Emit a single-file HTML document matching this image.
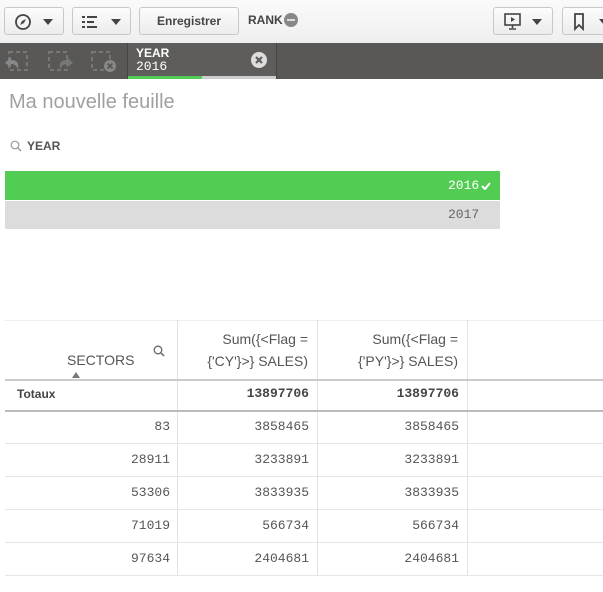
<!DOCTYPE html>
<html><head><meta charset="utf-8"><style>
*{margin:0;padding:0;box-sizing:border-box}
body{width:603px;height:592px;background:#fff;font-family:"Liberation Sans",sans-serif;position:relative;overflow:hidden}
.a{position:absolute}
.tb{left:0;top:0;width:603px;height:43px;background:linear-gradient(#fafafa,#efefef)}
.btn{position:absolute;top:7px;height:28px;border:1px solid #c8c8c8;border-radius:3px;background:linear-gradient(#fcfcfc,#ececec)}
.tri{position:absolute;width:0;height:0;border-left:5px solid transparent;border-right:5px solid transparent;border-top:6px solid #444;top:11px}
.dark{left:0;top:43px;width:603px;height:36px;background:#595856}
.mono{font-family:"Liberation Mono","DejaVu Sans Mono",monospace}
.v{position:absolute;width:1px;background:#e2e2e2}
.h{position:absolute;left:5px;width:598px;height:1px;background:#e6e6e6}
.n{position:absolute;font-family:"Liberation Mono",monospace;font-size:13px;color:#555;text-align:right}
</style></head><body>
<div class="a tb"></div>
<div class="btn" style="left:4px;width:60px"><svg class="a" style="left:9px;top:5px" width="18" height="18" viewBox="0 0 18 18"><circle cx="9" cy="9" r="7" fill="none" stroke="#444" stroke-width="1.8"/><path d="M12 6 L10 10 L6 12 L8 8Z" fill="#444"/></svg><div class="tri" style="left:38px"></div></div>
<div class="btn" style="left:72px;width:59px"><svg class="a" style="left:9px;top:7px" width="18" height="14"><g fill="#444"><rect x="0" y="1" width="3" height="2"/><rect x="5" y="1" width="10" height="2"/><rect x="0" y="6" width="3" height="2"/><rect x="5" y="6" width="7" height="2"/><rect x="0" y="11" width="3" height="2"/><rect x="5" y="11" width="10" height="2"/></g></svg><div class="tri" style="left:38px"></div></div>
<div class="btn" style="left:139px;width:100px;font-size:12px;font-weight:bold;color:#444;text-align:center;line-height:26px">Enregistrer</div>
<div class="a" style="left:248px;top:13px;font-size:12px;font-weight:bold;color:#444">RANK</div>
<div class="a" style="left:284px;top:13px;width:14px;height:14px;border-radius:7px;background:#888"><div class="a" style="left:3px;top:6px;width:8px;height:2px;background:#ddd"></div></div>
<div class="btn" style="left:493px;width:60px"><svg class="a" style="left:10px;top:5px" width="18" height="18"><rect x="1" y="1" width="15" height="11" fill="none" stroke="#444" stroke-width="1.6"/><path d="M7 4 L11 6.5 L7 9Z" fill="#444"/><path d="M8.5 12 V15 M5 16 H12" stroke="#444" stroke-width="1.6"/></svg><div class="tri" style="left:38px"></div></div>
<div class="btn" style="left:562px;width:50px"><svg class="a" style="left:10px;top:5px" width="12" height="18"><path d="M2 1 H10 V16 L6 12 L2 16Z" fill="none" stroke="#444" stroke-width="1.8"/></svg><div class="tri" style="left:36px"></div></div>
<div class="a dark"></div>
<svg class="a" style="left:3px;top:49px" width="120" height="24"><g stroke="#777" stroke-width="2" fill="none" stroke-dasharray="4 3"><rect x="6" y="3" width="18" height="18"/><rect x="46" y="3" width="18" height="18"/><rect x="89" y="3" width="18" height="18"/></g><path d="M2 14 L8 8 L8 11 C14 11 16 14 15 20 C13 16 11 15 8 15 L8 18Z" fill="#888"/><path d="M70 14 L64 8 L64 11 C58 11 56 14 57 20 C59 16 61 15 64 15 L64 18Z" fill="#777"/><circle cx="107" cy="17" r="6" fill="#888"/><path d="M104.5 14.5 L109.5 19.5 M109.5 14.5 L104.5 19.5" stroke="#595856" stroke-width="1.8"/></svg>
<div class="a" style="left:127px;top:43px;width:150px;height:36px;background:#5e5d5b;border-left:1px solid #444;border-right:1px solid #444"></div>
<div class="a" style="left:136px;top:46px;font-size:12px;font-weight:bold;color:#fff">YEAR</div>
<div class="a mono" style="left:136px;top:59px;font-size:13px;color:#fff">2016</div>
<div class="a" style="left:251px;top:52px;width:16px;height:16px;border-radius:8px;background:#ddd"><svg class="a" style="left:0;top:0" width="16" height="16"><path d="M5 5 L11 11 M11 5 L5 11" stroke="#5e5d5b" stroke-width="2.2"/></svg></div>
<div class="a" style="left:128px;top:76px;width:74px;height:3px;background:#52cc52"></div>
<div class="a" style="left:202px;top:76px;width:74px;height:3px;background:#ccc"></div>
<div class="a" style="left:9px;top:91px;font-size:20px;color:#a0a0a0">Ma nouvelle feuille</div>
<svg class="a" style="left:10px;top:140px" width="12" height="12"><circle cx="5" cy="5" r="3.8" fill="none" stroke="#999" stroke-width="1.2"/><path d="M8 8 L11 11" stroke="#999" stroke-width="1.4"/></svg>
<div class="a" style="left:27px;top:139px;font-size:12px;font-weight:bold;color:#555">YEAR</div>
<div class="a" style="left:5px;top:171px;width:495px;height:29px;background:#52cc52"></div>
<div class="a mono" style="left:448px;top:178px;font-size:13px;color:#fff">2016</div>
<svg class="a" style="left:481px;top:182px" width="10" height="8"><path d="M1 4 L4 7 L9 1" stroke="#fff" stroke-width="2" fill="none"/></svg>
<div class="a" style="left:5px;top:201px;width:495px;height:28px;background:#dcdcdc"></div>
<div class="a mono" style="left:448px;top:207px;font-size:13px;color:#666">2017</div>

<div class="h" style="top:320px;background:#eee"></div>
<div class="v" style="left:177px;top:320px;height:256px"></div>
<div class="v" style="left:317px;top:320px;height:256px"></div>
<div class="v" style="left:467px;top:320px;height:256px"></div>
<div class="a" style="left:67px;top:352px;font-size:14px;color:#555">SECTORS</div>
<div class="a" style="left:72px;top:372px;width:0;height:0;border-left:4px solid transparent;border-right:4px solid transparent;border-bottom:6px solid #777"></div>
<svg class="a" style="left:153px;top:345px" width="12" height="12"><circle cx="5" cy="5" r="3.8" fill="none" stroke="#666" stroke-width="1.3"/><path d="M8 8 L11 11" stroke="#666" stroke-width="1.5"/></svg>
<div class="a" style="left:180px;top:328px;width:128px;text-align:right;font-size:14px;color:#555;line-height:22px">Sum({&lt;Flag =<br>{'CY'}&gt;} SALES)</div>
<div class="a" style="left:320px;top:328px;width:138px;text-align:right;font-size:14px;color:#555;line-height:22px">Sum({&lt;Flag =<br>{'PY'}&gt;} SALES)</div>
<div class="h" style="top:379px;height:2px;background:#ccc"></div>
<div class="a" style="left:17px;top:387px;font-size:12px;font-weight:bold;color:#444">Totaux</div>
<div class="n" style="left:180px;top:386px;width:129px;font-weight:bold;color:#444">13897706</div>
<div class="n" style="left:320px;top:386px;width:139px;font-weight:bold;color:#444">13897706</div>
<div class="h" style="top:410px;height:2px;background:#bbb"></div>

<div class="n" style="left:10px;top:419px;width:160px">83</div><div class="n" style="left:180px;top:419px;width:129px">3858465</div><div class="n" style="left:320px;top:419px;width:139px">3858465</div>
<div class="h" style="top:443px"></div>
<div class="n" style="left:10px;top:452px;width:160px">28911</div><div class="n" style="left:180px;top:452px;width:129px">3233891</div><div class="n" style="left:320px;top:452px;width:139px">3233891</div>
<div class="h" style="top:476px"></div>
<div class="n" style="left:10px;top:485px;width:160px">53306</div><div class="n" style="left:180px;top:485px;width:129px">3833935</div><div class="n" style="left:320px;top:485px;width:139px">3833935</div>
<div class="h" style="top:509px"></div>
<div class="n" style="left:10px;top:518px;width:160px">71019</div><div class="n" style="left:180px;top:518px;width:129px">566734</div><div class="n" style="left:320px;top:518px;width:139px">566734</div>
<div class="h" style="top:542px"></div>
<div class="n" style="left:10px;top:551px;width:160px">97634</div><div class="n" style="left:180px;top:551px;width:129px">2404681</div><div class="n" style="left:320px;top:551px;width:139px">2404681</div>
<div class="h" style="top:575px"></div>
</body></html>
